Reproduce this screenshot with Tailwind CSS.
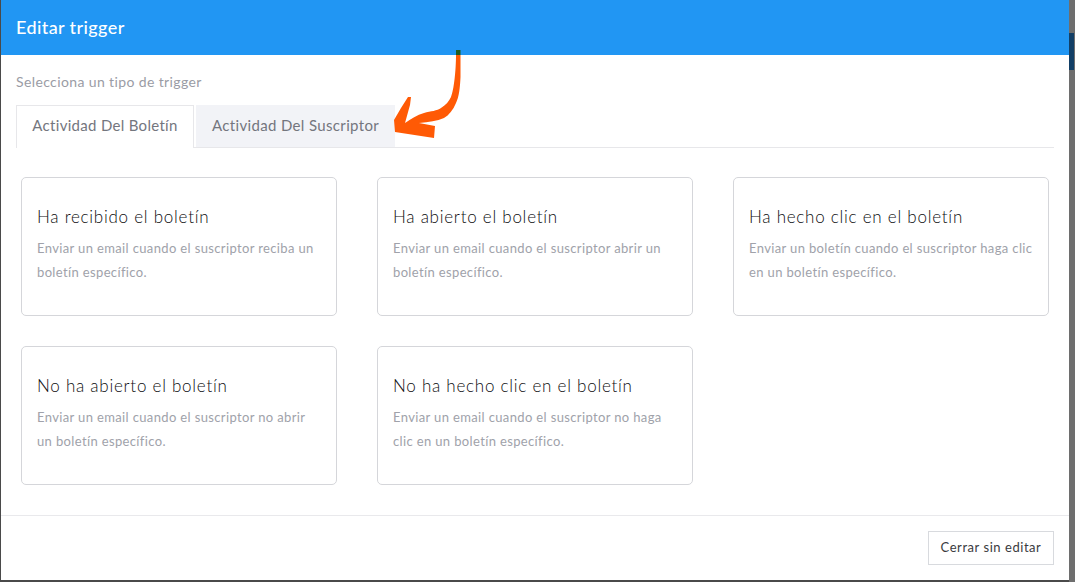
<!DOCTYPE html>
<html><head><meta charset="utf-8"><script src="https://cdn.jsdelivr.net/npm/@tailwindcss/browser@4"></script></head>
<body class="m-0 w-[1075px] h-[582px] overflow-hidden bg-[#4a4a4a] font-['Lato','Noto_Sans',sans-serif]">
<div class="flex h-[582px]">
<div class="relative ml-px mb-[2px] w-[1068px] flex flex-col bg-white">
  <header class="h-[55px] bg-[#2196f3] pl-[15px] flex items-center text-[18px] tracking-[0.4px] font-medium text-white">Editar trigger</header>
  <main class="flex-1 px-[15px] pt-[18px]">
    <p class="text-[14px] leading-[17px] text-[#9a9ca5] tracking-[0.38px]">Selecciona un tipo de trigger</p>
    <div class="mt-[15px] flex h-[43px] gap-[2px] border-b border-[#e7e7ea] w-[1038px]">
      <div class="h-[43px] w-[178px] pb-[3px] border border-b-0 border-[#e7e7ea] bg-white flex items-center justify-center text-[15px] text-[#74767e] tracking-[0.3px]">Actividad Del Boletín</div>
      <div class="h-[42px] w-[199px] pb-[2px] bg-[#f2f3f7] flex items-center justify-center text-[15px] text-[#74767e] tracking-[0.35px]">Actividad Del Suscriptor</div>
    </div>
    <div class="mt-[29px] ml-[5px] grid grid-cols-[316px_316px_316px] gap-x-[40px] gap-y-[30px]">
      <div class="h-[139px] rounded-[5px] border border-[#d5d6da] px-[15px] pt-[28px]"><h3 class="text-[17px] leading-[22px] font-light text-[#0d0d0f] tracking-[0.75px]">Ha recibido el boletín</h3><p class="mt-[8px] whitespace-nowrap text-[13px] leading-[24px] text-[#a0a2aa] tracking-[0.36px]">Enviar un email cuando el suscriptor reciba un<br>boletín específico.</p></div>
      <div class="h-[139px] rounded-[5px] border border-[#d5d6da] px-[15px] pt-[28px]"><h3 class="text-[17px] leading-[22px] font-light text-[#0d0d0f] tracking-[0.75px]">Ha abierto el boletín</h3><p class="mt-[8px] whitespace-nowrap text-[13px] leading-[24px] text-[#a0a2aa] tracking-[0.36px]">Enviar un email cuando el suscriptor abrir un<br>boletín específico.</p></div>
      <div class="h-[139px] rounded-[5px] border border-[#d5d6da] px-[15px] pt-[28px]"><h3 class="text-[17px] leading-[22px] font-light text-[#0d0d0f] tracking-[0.75px]">Ha hecho clic en el boletín</h3><p class="mt-[8px] whitespace-nowrap text-[13px] leading-[24px] text-[#a0a2aa] tracking-[0.36px]">Enviar un boletín cuando el suscriptor haga clic<br>en un boletín específico.</p></div>
      <div class="h-[139px] rounded-[5px] border border-[#d5d6da] px-[15px] pt-[28px]"><h3 class="text-[17px] leading-[22px] font-light text-[#0d0d0f] tracking-[0.75px]">No ha abierto el boletín</h3><p class="mt-[8px] whitespace-nowrap text-[13px] leading-[24px] text-[#a0a2aa] tracking-[0.36px]">Enviar un email cuando el suscriptor no abrir<br>un boletín específico.</p></div>
      <div class="h-[139px] rounded-[5px] border border-[#d5d6da] px-[15px] pt-[28px]"><h3 class="text-[17px] leading-[22px] font-light text-[#0d0d0f] tracking-[0.75px]">No ha hecho clic en el boletín</h3><p class="mt-[8px] whitespace-nowrap text-[13px] leading-[24px] text-[#a0a2aa] tracking-[0.36px]">Enviar un email cuando el suscriptor no haga<br>clic en un boletín específico.</p></div>
    </div>
  </main>
  <footer class="h-[65px] border-t border-[#e9e9ec] flex justify-end pr-[15px] pt-[15px]">
    <div class="h-[34px] w-[126px] border border-[#d8dade] flex items-center justify-center text-[13px] text-[#3a3b40] tracking-[0.55px]">Cerrar sin editar</div>
  </footer>
  <svg class="absolute left-[392px] top-[49px]" width="72" height="92" viewBox="392 49 72 92"><path fill="#ff5a05" d="M455 55 L459.500 55 L459.500 77 C459 88 458 97 455 103 C452 110 448 115 443 118 C436 121 428 122 418 123 L434 126 L433 138 L394 132 L393 120 L400 108 L407 97 L410 97 L409 105 L404 123 C410 119 416 115 423 113 C430 111 436 111 440 108 C445 105 448 101 450 97 C453 90 455 70 455 55 Z"/><rect x="455" y="50" width="4.500" height="5" fill="#1f5c20"/></svg>
</div>
<div class="flex-1 flex flex-col bg-[#6e6e6e]"><div class="h-[33px]"></div><div class="h-[37px] w-[5px] bg-[#123f66]"></div></div>
</div>
</body></html>
